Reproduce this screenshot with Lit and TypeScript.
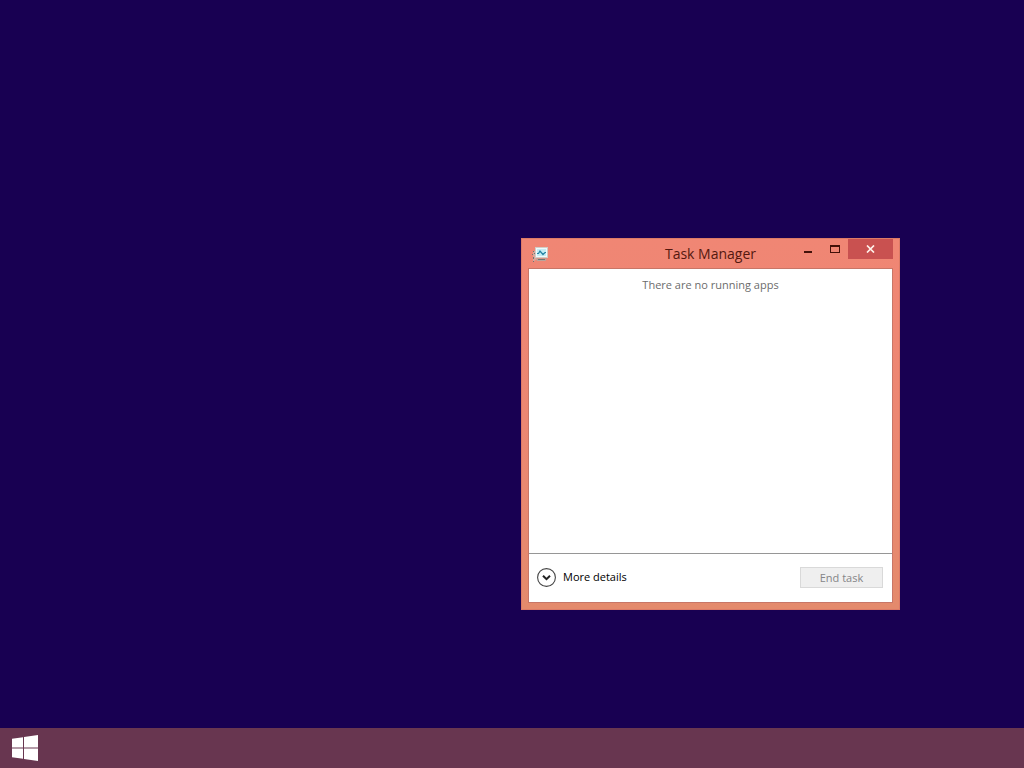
import { LitElement, html, css } from "lit";
import { customElement } from "lit/decorators.js";

@customElement("task-manager-window")
class TaskManagerWindow extends LitElement {
  static styles = css`
    :host {
      display: flex;
      flex-direction: column;
      box-sizing: border-box;
      border: 1px solid #dc7a66;
      padding: 0 6px 6px;
      background: linear-gradient(#f08674, #ec8772 50%, #e48a6c);
      font: 11px/16px "Open Sans", "Noto Sans", sans-serif;
      color: #000;
    }
    button {
      font: inherit;
      color: inherit;
      margin: 0;
      padding: 0;
      border: 0;
      background: none;
    }
    svg {
      display: block;
    }
    .titlebar {
      display: grid;
      grid-template-columns: 1fr auto 1fr;
      height: 29px;
    }
    .app-icon {
      margin: 7px 0 0 3px;
    }
    .title {
      margin: 0;
      font-size: 14px;
      line-height: 30px;
      font-weight: 400;
      color: #54180f;
    }
    .controls {
      display: flex;
      justify-content: flex-end;
      height: 20px;
    }
    .control {
      display: grid;
      place-items: center;
      width: 27px;
    }
    .close {
      width: 45px;
      background: #c95150;
    }
    .client {
      flex: 1;
      display: flex;
      flex-direction: column;
      border: 1px solid #c87667;
      background: #fff;
    }
    .list {
      flex: 1;
      padding-top: 8px;
      text-align: center;
      color: #6c6c6c;
    }
    .empty {
      margin: 0;
    }
    .footer {
      display: flex;
      align-items: center;
      justify-content: space-between;
      height: 46px;
      padding: 0 9px 2px 8px;
      border-top: 1px solid #969696;
    }
    .details {
      display: flex;
      align-items: center;
      gap: 7px;
    }
    .end {
      box-sizing: border-box;
      width: 83px;
      height: 21px;
      border: 1px solid #d9d9d9;
      background: #efefef;
      color: #858588;
      line-height: 19px;
    }
  `;

  render() {
    return html`
      <header class="titlebar">
        <svg class="app-icon" width="18" height="17" viewBox="0 0 18 17" aria-hidden="true">
          <path d="M2 5h4v8l-4 3z" fill="#d9a79c" />
          <path d="M5 12.500h11L14.500 15H6z" fill="#b9a49c" />
          <path d="M2.500 5v1M1.500 8v1M3.500 7v1M2.500 11v2M4.500 10v2M2.500 15v1M7 13.500h7" stroke="#6d7672" />
          <rect x="4.500" y="1.500" width="12" height="10" fill="#effafb" stroke="#d2cdc6" />
          <rect x="6" y="3" width="9" height="7" fill="#c3edf5" />
          <path d="M6 7.500h1.500L9 5l3 3.500 2-2h1" fill="none" stroke="#2383a4" stroke-width="1.200" />
        </svg>
        <h1 class="title">Task Manager</h1>
        <div class="controls">
          <button class="control" aria-label="Minimize">
            <svg width="8" height="8" viewBox="0 0 8 8"><path d="M0 6h8v2H0z" fill="#431109" /></svg>
          </button>
          <button class="control" aria-label="Maximize">
            <svg width="10" height="8" viewBox="0 0 10 8">
              <path d="M0 0h10v8H0zM1 2v5h8V2z" fill="#431109" fill-rule="evenodd" />
            </svg>
          </button>
          <button class="control close" aria-label="Close">
            <svg width="9" height="8" viewBox="0 0 9 8">
              <path d="M1 .5l7 7M8 .5l-7 7" stroke="#fff1ea" stroke-width="1.700" />
            </svg>
          </button>
        </div>
      </header>
      <div class="client">
        <div class="list"><p class="empty">There are no running apps</p></div>
        <div class="footer">
          <button class="details">
            <svg width="19" height="19" viewBox="0 0 19 19" aria-hidden="true">
              <circle cx="9.500" cy="9.500" r="8.900" fill="#fff" stroke="#444" stroke-width="1.100" />
              <path d="M6 7.700l3.500 3.500L13 7.700" fill="none" stroke="#222" stroke-width="2" />
            </svg>
            More details
          </button>
          <button class="end" disabled>End task</button>
        </div>
      </div>
    `;
  }
}

@customElement("app-root")
class AppRoot extends LitElement {
  static styles = css`
    :host {
      display: flex;
      flex-direction: column;
      height: 100vh;
      background: #180052;
    }
    .desktop {
      flex: 1;
      position: relative;
    }
    .window {
      position: absolute;
      left: 521px;
      top: 238px;
      width: 379px;
      height: 372px;
    }
    .taskbar {
      display: flex;
      align-items: center;
      height: 40px;
      background: #683650;
    }
    .start {
      margin: 0;
      padding: 0 12px;
      border: 0;
      background: none;
    }
    .start svg {
      display: block;
    }
  `;

  render() {
    return html`
      <main class="desktop">
        <task-manager-window class="window"></task-manager-window>
      </main>
      <nav class="taskbar">
        <button class="start" aria-label="Start">
          <svg width="26" height="26" viewBox="0 0 26 26">
            <path
              d="M0 3.700L11 2.200V12.500H0zM12 2.100L26 0V12.500H12zM0 13.500H11V23.800L0 22.300zM12 13.500H26V26L12 23.900z"
              fill="#fff"
            />
          </svg>
        </button>
      </nav>
    `;
  }
}
